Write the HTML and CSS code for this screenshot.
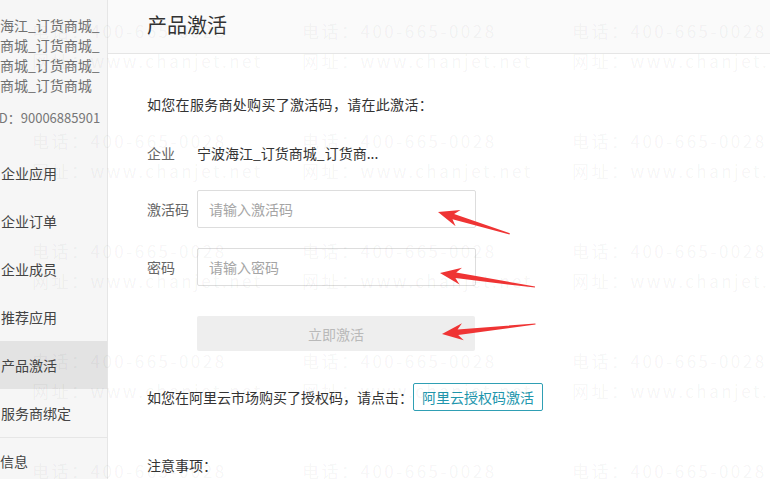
FILE: index.html
```html
<!DOCTYPE html>
<html lang="zh-CN">
<head>
	<meta charset="utf-8">
	<title>产品激活</title>
	<link rel="stylesheet" href="styles.css">
</head>
<body>
	<div class="page">
		<aside class="side">
			<div class="corp">
				<p class="corp-name">宁波海江_订货商城_<br>订货商城_订货商城_<br>订货商城_订货商城_<br>订货商城_订货商城</p>
				<p class="corp-id">ID：90006885901</p>
			</div>
			<ul class="menu">
				<li>企业应用</li>
				<li>企业订单</li>
				<li>企业成员</li>
				<li>推荐应用</li>
				<li class="on">产品激活</li>
				<li>服务商绑定</li>
				<li class="sep"><span class="cut">企业信息</span></li>
			</ul>
		</aside>

		<main class="main">
			<div class="head">
				<h2>产品激活</h2>
			</div>
			<div class="body">
				<p class="intro">如您在服务商处购买了激活码，请在此激活：</p>

				<div class="row row-corp">
					<span class="label">企业</span>
					<span class="value">宁波海江_订货商城_订货商...</span>
				</div>

				<div class="row row-input">
					<span class="label">激活码</span>
					<input type="text" class="inp" placeholder="请输入激活码">
				</div>
				<div class="row row-input row-pwd">
					<span class="label">密码</span>
					<input type="password" class="inp" placeholder="请输入密码">
				</div>
				<div class="row row-btn">
					<span class="label"></span>
					<button class="btn-go" disabled>立即激活</button>
				</div>

				<div class="ali">
					<span>如您在阿里云市场购买了授权码，请点击：</span>
					<a href="javascript:;" class="btn-ali">阿里云授权码激活</a>
				</div>

				<p class="notes">注意事项：</p>
			</div>
		</main>
	</div>

	<!-- 水印 -->
	<div class="mark">
		<div class="tile"><p>电话：400-665-0028</p><p>网址：www.chanjet.net</p></div>
		<div class="tile"><p>电话：400-665-0028</p><p>网址：www.chanjet.net</p></div>
		<div class="tile"><p>电话：400-665-0028</p><p>网址：www.chanjet.net</p></div>
		<div class="tile"><p>电话：400-665-0028</p><p>网址：www.chanjet.net</p></div>
		<div class="tile"><p>电话：400-665-0028</p><p>网址：www.chanjet.net</p></div>
		<div class="tile"><p>电话：400-665-0028</p><p>网址：www.chanjet.net</p></div>
		<div class="tile"><p>电话：400-665-0028</p><p>网址：www.chanjet.net</p></div>
		<div class="tile"><p>电话：400-665-0028</p><p>网址：www.chanjet.net</p></div>
		<div class="tile"><p>电话：400-665-0028</p><p>网址：www.chanjet.net</p></div>
		<div class="tile"><p>电话：400-665-0028</p><p>网址：www.chanjet.net</p></div>
		<div class="tile"><p>电话：400-665-0028</p><p>网址：www.chanjet.net</p></div>
		<div class="tile"><p>电话：400-665-0028</p><p>网址：www.chanjet.net</p></div>
		<div class="tile"><p>电话：400-665-0028</p><p>网址：www.chanjet.net</p></div>
		<div class="tile"><p>电话：400-665-0028</p><p>网址：www.chanjet.net</p></div>
		<div class="tile"><p>电话：400-665-0028</p><p>网址：www.chanjet.net</p></div>
	</div>

	<!-- 标注箭头 -->
	<svg class="arrows" width="770" height="479" viewBox="0 0 770 479">
		<g fill="#ef3434">
			<polygon transform="translate(438 212) rotate(17)" points="0,0 21,-8.5 16,-2.8 75,-0.6 75,0.6 16,2.8 21,8.5"/>
			<polygon transform="translate(440 273) rotate(8.4)" points="0,0 21,-8.5 16,-2.8 96,-0.6 96,0.6 16,2.8 21,8.5"/>
			<polygon transform="translate(442 334) rotate(-6.1)" points="0,0 21,-8.5 16,-2.8 94,-0.6 94,0.6 16,2.8 21,8.5"/>
		</g>
	</svg>
</body>
</html>
```

FILE: styles.css
```css
*{
	margin:0;
	padding:0;
	box-sizing: border-box;
}

body {
	width: 770px;
	height: 479px;
	overflow: hidden;
	position: relative;
	font-family: "Noto Sans CJK SC", "Microsoft YaHei", sans-serif;
	font-size: 14px;
	color: #333;
	background: #fff;
}

.page {
	display: flex;
	height: 479px;
}

/* 左侧栏 */
.side {
	width: 108px;
	flex: none;
	background: #f6f6f6;
	border-right: 1px solid #e6e6e6;
	overflow: hidden;
}
.corp {
	padding-top: 15px;
	white-space: nowrap;
}
.corp-name {
	margin-left: -28px;
	line-height: 20px;
	color: #707070;
}
.corp-id {
	margin-top: 13px;
	margin-left: -5px;
	line-height: 20px;
	font-size: 13px;
	color: #777;
}
.menu {
	list-style: none;
	margin-top: 21px;
}
.menu li {
	height: 48px;
	line-height: 48px;
	padding-left: 1px;
	color: #444;
	white-space: nowrap;
}
.menu li.on {
	background: #e3e3e3;
}
.menu li.sep {
	border-top: 1px solid #e6e6e6;
	line-height: 47px;
}
.menu .cut {
	margin-left: -29px;
}

/* 主体 */
.main {
	flex: 1;
}
.head {
	height: 54px;
	background: #fafafa;
	border-bottom: 1px solid #e5e5e5;
	padding-left: 39px;
}
.head h2 {
	font-size: 20px;
	font-weight: normal;
	line-height: 50px;
	color: #333;
}
.body {
	padding-left: 39px;
}
.intro {
	margin-top: 40px;
	line-height: 20px;
	letter-spacing: 0.3px;
}
.row {
	display: flex;
	align-items: center;
}
.label {
	width: 50px;
	flex: none;
	color: #666;
}
.row-corp {
	margin-top: 29px;
	line-height: 20px;
}
.row-corp .value {
	color: #333;
}
.row-input {
	margin-top: 27px;
}
.row-pwd {
	margin-top: 20px;
}
.inp {
	width: 279px;
	height: 38px;
	border: 1px solid #dddddd;
	border-radius: 2px;
	padding-left: 11px;
	font-family: inherit;
	font-size: 14px;
	color: #333;
	outline: none;
	background: transparent;
}
.inp::placeholder {
	color: #a5a5a5;
}
.row-btn {
	margin-top: 30px;
}
.btn-go {
	width: 278px;
	height: 35px;
	border: none;
	border-radius: 2px;
	background: #eeeeee;
	color: #b9b9b9;
	font-family: inherit;
	font-size: 14px;
}
.ali {
	margin-top: 32px;
	display: flex;
	align-items: center;
	height: 28px;
}
.btn-ali {
	display: inline-block;
	height: 28px;
	line-height: 26px;
	padding: 0 8px;
	border: 1px solid #2f9fb4;
	border-radius: 2px;
	color: #2196ad;
	text-decoration: none;
}
.notes {
	margin-top: 44px;
	line-height: 20px;
}

/* 水印层 */
.mark {
	position: absolute;
	top: 16px;
	left: 32px;
	display: grid;
	grid-template-columns: repeat(3, 270px);
	grid-auto-rows: 110px;
	pointer-events: none;
	white-space: nowrap;
}
.tile p {
	font-size: 17px;
	line-height: 30px;
	letter-spacing: 2.5px;
	color: rgba(0, 0, 0, 0.052);
}

.arrows {
	position: absolute;
	top: 0;
	left: 0;
	pointer-events: none;
}
```
